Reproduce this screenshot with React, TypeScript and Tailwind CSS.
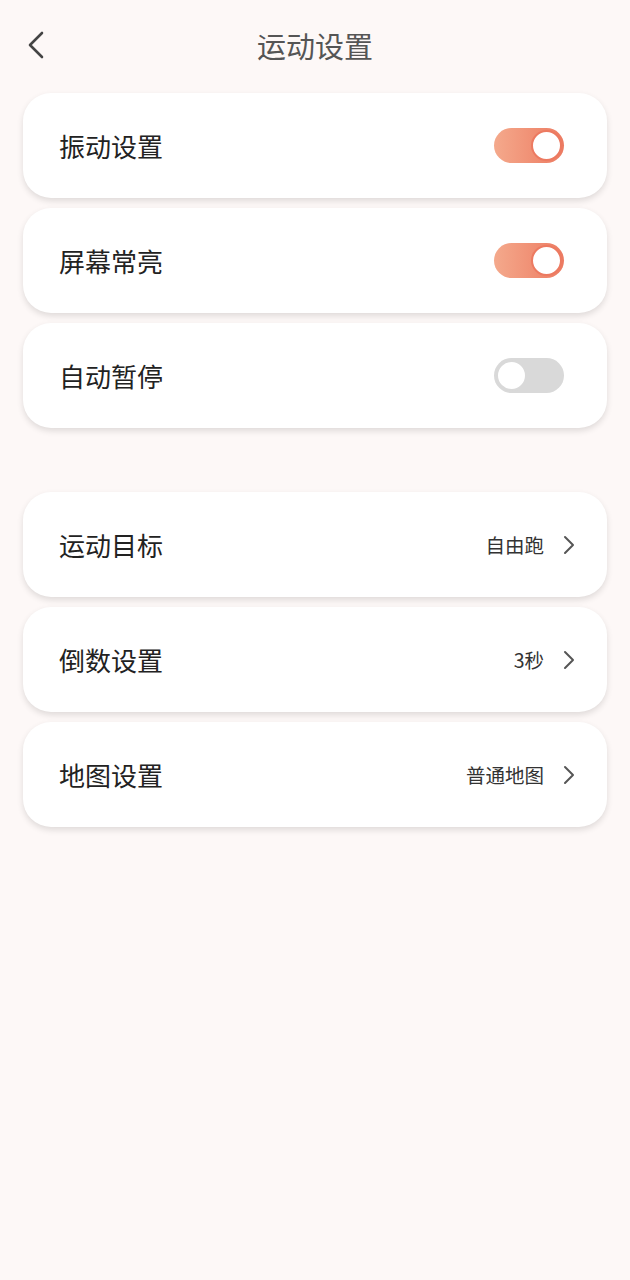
import { useState } from "react";

const font = '"Noto Sans CJK SC", "Noto Sans", sans-serif';

function Toggle({ on, onChange }: { on: boolean; onChange: () => void }) {
  return (
    <button
      onClick={onChange}
      className={`flex h-[35px] w-[70px] items-center rounded-full p-[2px] ${
        on ? "justify-end bg-gradient-to-r from-[#f4a98c] to-[#ec7a61]" : "justify-start bg-[#d9d9d9]"
      }`}
    >
      <span
        className={`h-[31px] w-[31px] rounded-full border-2 bg-white ${
          on ? "border-[#ec7a61]" : "border-[#d9d9d9]"
        }`}
      />
    </button>
  );
}

function Chevron() {
  return (
    <svg width="12" height="20" viewBox="0 0 12 20" fill="none">
      <path d="M2 2l8 8-8 8" stroke="#555" strokeWidth="2" strokeLinecap="round" strokeLinejoin="round" />
    </svg>
  );
}

function Card({ children, pr }: { children: React.ReactNode; pr: string }) {
  return (
    <div
      className={`flex h-[105px] items-center justify-between rounded-[28px] bg-white pl-[36px] ${pr} shadow-[0_3px_6px_rgba(0,0,0,0.12)]`}
    >
      {children}
    </div>
  );
}

export default function App() {
  const [toggles, setToggles] = useState([
    { label: "振动设置", on: true },
    { label: "屏幕常亮", on: true },
    { label: "自动暂停", on: false },
  ]);
  const links = [
    { label: "运动目标", value: "自由跑" },
    { label: "倒数设置", value: "3秒" },
    { label: "地图设置", value: "普通地图" },
  ];

  return (
    <div className="min-h-[1280px] bg-[#fdf8f7]" style={{ fontFamily: font }}>
      <header className="relative flex h-[93px] items-center justify-center pb-[2px]">
        <button className="absolute left-[26px] top-[30px]">
          <svg width="20" height="30" viewBox="0 0 20 30" fill="none">
            <path d="M16 3L4 15l12 12" stroke="#444" strokeWidth="2.6" strokeLinecap="round" strokeLinejoin="round" />
          </svg>
        </button>
        <h1 className="text-[29px] text-[#555]">运动设置</h1>
      </header>

      <div className="flex flex-col gap-[10px] px-[23px]">
        {toggles.map((t, i) => (
          <Card key={t.label} pr="pr-[43px]">
            <span className="text-[26px] text-[#222]">{t.label}</span>
            <Toggle
              on={t.on}
              onChange={() =>
                setToggles((prev) => prev.map((p, j) => (j === i ? { ...p, on: !p.on } : p)))
              }
            />
          </Card>
        ))}
      </div>

      <div className="mt-[64px] flex flex-col gap-[10px] px-[23px]">
        {links.map((l) => (
          <Card key={l.label} pr="pr-[32px]">
            <span className="text-[26px] text-[#222]">{l.label}</span>
            <span className="flex items-center gap-[19px] text-[19.5px] text-[#333]">
              {l.value}
              <Chevron />
            </span>
          </Card>
        ))}
      </div>
    </div>
  );
}
